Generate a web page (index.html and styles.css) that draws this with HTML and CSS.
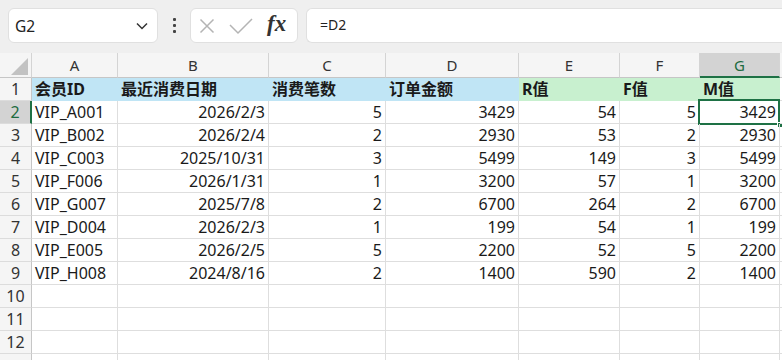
FILE: index.html
```html
<!DOCTYPE html>
<html lang="zh">
<head>
    <meta charset="UTF-8">
    <title>会员RFM</title>
    <link rel="stylesheet" href="styles.css">
</head>
<body>
    <div class="toolbar">
        <div class="name-box">
            <span>G2</span>
            <svg width="14" height="10" viewBox="0 0 14 10"><polyline points="2,2.5 7,7.5 12,2.5" fill="none" stroke="#333" stroke-width="1.5"/></svg>
        </div>
        <div class="dots"><i></i><i></i><i></i></div>
        <div class="fx-box">
            <svg width="16" height="16" viewBox="0 0 16 16"><path d="M1.5 1.5 L14.5 14.5 M14.5 1.5 L1.5 14.5" stroke="#b4b4b4" stroke-width="1.5" fill="none"/></svg>
            <svg width="24" height="18" viewBox="0 0 24 18"><polyline points="1,8 9,16 23,2" stroke="#b4b4b4" stroke-width="1.5" fill="none"/></svg>
            <span class="fx">fx</span>
        </div>
        <div class="formula">=D2</div>
    </div>

    <div class="sheet headers">
        <div class="corner"><span class="tri"></span></div>
        <div class="col-h">A</div>
        <div class="col-h">B</div>
        <div class="col-h">C</div>
        <div class="col-h">D</div>
        <div class="col-h">E</div>
        <div class="col-h">F</div>
        <div class="col-h active">G</div>
        <div class="col-h rest"></div>
    </div>
    <div class="sheet" id="rows"></div>

    <script>
        const data = [
            ['VIP_A001', '2026/2/3', 5, 3429, 54, 5, 3429],
            ['VIP_B002', '2026/2/4', 2, 2930, 53, 2, 2930],
            ['VIP_C003', '2025/10/31', 3, 5499, 149, 3, 5499],
            ['VIP_F006', '2026/1/31', 1, 3200, 57, 1, 3200],
            ['VIP_G007', '2025/7/8', 2, 6700, 264, 2, 6700],
            ['VIP_D004', '2026/2/3', 1, 199, 54, 1, 199],
            ['VIP_E005', '2026/2/5', 5, 2200, 52, 5, 2200],
            ['VIP_H008', '2024/8/16', 2, 1400, 590, 2, 1400]
        ];
        const heads = ['会员ID', '最近消费日期', '消费笔数', '订单金额', 'R值', 'F值', 'M值'];
        const rows = document.getElementById('rows');
        let html = '';

        html += '<div class="row-h">1</div>';
        heads.forEach((h, i) => {
            html += `<div class="cell head ${i < 4 ? 'blue' : 'green'}">${h}</div>`;
        });
        html += '<div class="cell"></div>';

        // rows 2..12, the 13th only peeks in at the bottom
        for (let r = 0; r < 12; r++) {
            const n = r + 2;
            const rec = data[r];
            html += `<div class="row-h${n === 2 ? ' active' : ''}">${n < 13 ? n : ''}</div>`;
            for (let c = 0; c < 7; c++) {
                const v = rec ? rec[c] : '';
                const cls = c === 0 ? 'cell' : 'cell num';
                const sel = (n === 2 && c === 6) ? '<span class="sel"><span class="handle"></span></span>' : '';
                html += `<div class="${cls}">${v}${sel}</div>`;
            }
            html += '<div class="cell"></div>';
        }
        rows.innerHTML = html;
    </script>
</body>
</html>
```

FILE: styles.css
```css
* {
    margin: 0;
    padding: 0;
    box-sizing: border-box;
}

body {
    width: 782px;
    height: 360px;
    overflow: hidden;
    background: #ffffff;
    font-family: "Noto Sans", "Noto Sans CJK SC", sans-serif;
    color: #1a1a1a;
}

.toolbar {
    height: 53px;
    background: #efefef;
    display: flex;
    align-items: flex-start;
    padding-top: 8px;
    padding-left: 8px;
}

.name-box {
    width: 150px;
    height: 35px;
    background: #fff;
    border: 1px solid #e0e0e0;
    border-radius: 6px;
    display: flex;
    align-items: center;
    justify-content: space-between;
    padding: 0 8px 0 6px;
    font-size: 15.5px;
    color: #222;
}

.dots {
    width: 32px;
    height: 35px;
    display: flex;
    flex-direction: column;
    align-items: center;
    justify-content: center;
    gap: 3px;
}

.dots i {
    width: 3px;
    height: 3px;
    background: #444;
    border-radius: 1px;
}

.fx-box {
    width: 108px;
    height: 35px;
    background: #fff;
    border: 1px solid #e0e0e0;
    border-radius: 6px;
    display: flex;
    align-items: center;
    gap: 14px;
    padding-left: 8px;
}

.fx {
    font-family: "Liberation Serif", serif;
    font-style: italic;
    font-weight: bold;
    font-size: 23px;
    color: #333;
    margin-top: -4px;
}

.formula {
    flex: 1;
    height: 35px;
    margin-left: 8px;
    background: #fff;
    border: 1px solid #e0e0e0;
    border-right: none;
    border-radius: 6px 0 0 6px;
    padding-left: 13px;
    line-height: 32px;
    font-size: 14px;
    color: #222;
}

.sheet {
    display: grid;
    grid-template-columns: 32px 86px 151px 117px 133px 101px 80px 80px 1fr;
    grid-auto-rows: 23px;
    font-size: 16px;
}

.sheet.headers {
    grid-auto-rows: 25px;
}

.corner,
.col-h {
    background: #f5f5f5;
    border-right: 1px solid #d4d4d4;
    border-bottom: 1px solid #c6c6c6;
    position: relative;
}

.col-h {
    text-align: center;
    line-height: 24px;
    font-size: 15px;
    color: #333;
}

.col-h.active {
    background: #d3d3d3;
    color: #1d6b3f;
    border-bottom: 2px solid #1e7145;
}

.col-h.rest {
    border-right: none;
}

.tri {
    position: absolute;
    right: 3px;
    bottom: 2px;
    width: 0;
    height: 0;
    border-left: 17px solid transparent;
    border-bottom: 17px solid #c2c2c2;
}

.row-h {
    background: #f5f5f5;
    border-right: 1px solid #c6c6c6;
    border-bottom: 1px solid #dcdcdc;
    text-align: center;
    line-height: 22px;
    font-size: 16px;
    color: #333;
}

.row-h.active {
    background: #d3d3d3;
    color: #1d6b3f;
    border-right: 2px solid #1e7145;
}

.cell {
    border-right: 1px solid #dedede;
    border-bottom: 1px solid #dedede;
    line-height: 22px;
    padding: 0 3px;
    white-space: nowrap;
    position: relative;
}

.num {
    text-align: right;
}

.head {
    font-weight: bold;
    padding-left: 3px;
}

.blue {
    background: #c0e5f5;
    border-right-color: #c0e5f5;
    border-bottom-color: #c0e5f5;
}

.green {
    background: #c8f0cf;
    border-right-color: #c8f0cf;
    border-bottom-color: #c8f0cf;
}

.sel {
    position: absolute;
    left: -2px;
    top: -2px;
    width: 82px;
    height: 26px;
    border: 2px solid #1e7145;
}

.handle {
    position: absolute;
    right: -5px;
    bottom: -5px;
    width: 6px;
    height: 6px;
    background: #1e7145;
    border: 1px solid #fff;
}
```
